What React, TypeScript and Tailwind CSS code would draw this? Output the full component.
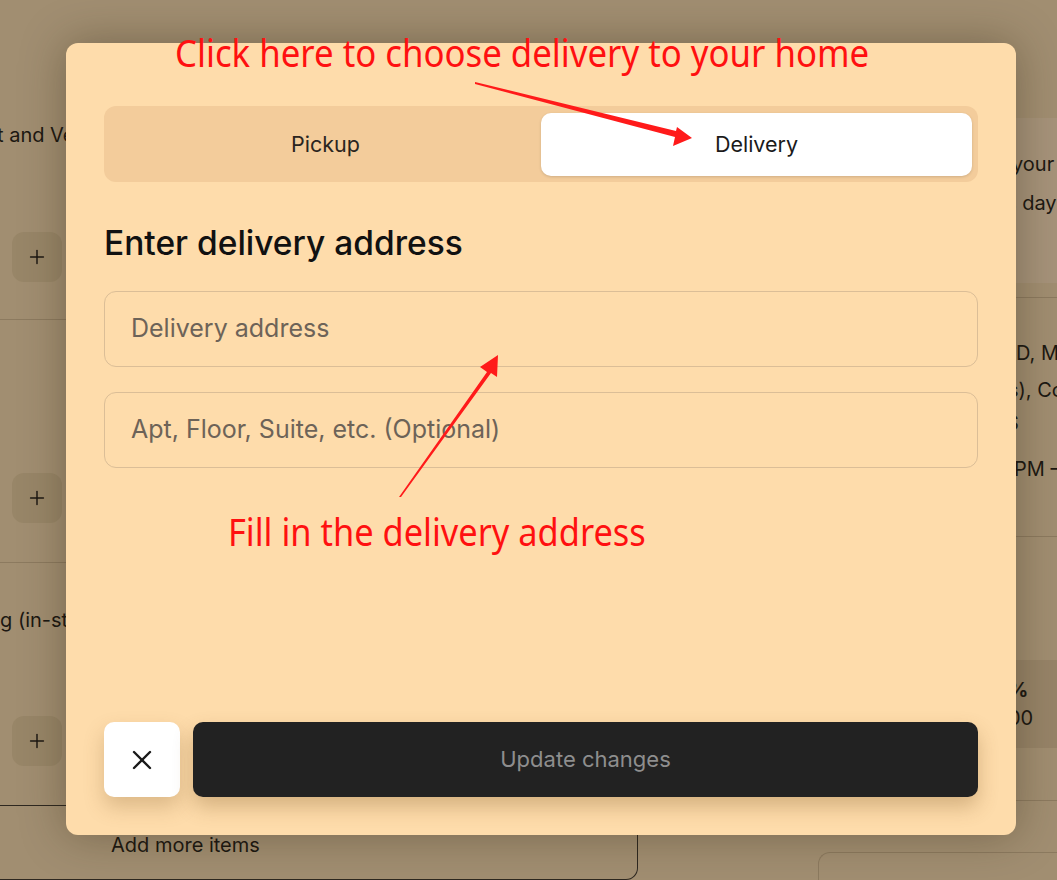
import { X, Plus } from "lucide-react";

function PlusButton() {
  return (
    <div className="flex h-[50px] w-[50px] items-center justify-center rounded-xl bg-[#988668]">
      <Plus className="h-[22px] w-[22px] text-[#1c1812]" strokeWidth={1.6} />
    </div>
  );
}

function Backdrop() {
  return (
    <div className="flex h-full w-full text-[20px] text-[#1c1812]">
      {/* cart items */}
      <div className="flex w-[638px] shrink-0 flex-col">
        <div className="flex h-[320px] shrink-0 flex-col border-b border-[#8c7a5f] pt-[120px]">
          <span className="-ml-[3px] whitespace-nowrap leading-[30px]">t and Vegetable box</span>
          <div className="ml-[12px] mt-[82px]">
            <PlusButton />
          </div>
        </div>
        <div className="flex h-[243px] shrink-0 flex-col justify-end border-b border-[#8c7a5f] pb-[39px]">
          <div className="ml-[12px]">
            <PlusButton />
          </div>
        </div>
        <div className="flex h-[242px] shrink-0 flex-col pt-[42px]">
          <span className="whitespace-nowrap leading-[30px]">g (in-store)</span>
          <div className="ml-[12px] mt-[81px]">
            <PlusButton />
          </div>
        </div>
        <div className="flex h-[75px] shrink-0 items-center rounded-br-xl border-r border-t border-b border-[#2e2820] pl-[111px] pt-[4px]">
          Add more items
        </div>
      </div>
      {/* order summary */}
      <div className="flex flex-1 flex-col pl-[22px]">
        <div className="mt-[118px] flex h-[165px] shrink-0 flex-col rounded-l-xl bg-[#a6937a] pl-[352px] pt-[28px]">
          <span className="whitespace-nowrap leading-[36px]">your</span>
          <span className="-ml-[6px] mt-[3px] whitespace-nowrap leading-[36px]">s day</span>
        </div>
        <div className="mt-[14px] flex h-[240px] shrink-0 flex-col border-t border-b border-[#8c7a5f] pl-[352px] pt-[37px]">
          <span className="ml-[4px] whitespace-nowrap leading-[36px]">D, M</span>
          <span className="-ml-[4px] mt-[1px] whitespace-nowrap leading-[36px]">s), Co</span>
          <span className="-ml-[6px] -mt-[3px] whitespace-nowrap leading-[36px]">S</span>
          <span className="ml-[2px] mt-[10px] whitespace-nowrap leading-[36px]">PM –</span>
        </div>
        <div className="mt-[123px] flex h-[88px] shrink-0 flex-col justify-center bg-[#978468] pl-[352px]">
          <span className="-ml-[4px] font-bold leading-[28px]">%</span>
          <span className="-ml-[4px] leading-[28px]">00</span>
        </div>
        <div className="mt-[52px] h-[1px] shrink-0 bg-[#8c7a5f]" />
        <div className="ml-[158px] mt-[51px] h-[60px] shrink-0 rounded-tl-xl border-l border-t border-[#8c7a5f]" />
      </div>
    </div>
  );
}

function DeliveryModal() {
  return (
    <div className="absolute left-[66px] top-[43px] flex h-[792px] w-[950px] flex-col rounded-xl bg-[#fedcab] px-[38px] pb-[38px] pt-[63px] shadow-[0_0_45px_rgba(40,28,10,0.35)]">
      <div className="grid h-[76px] grid-cols-2 rounded-xl bg-[#f3cc9b] p-[6px] pt-[7px] text-[21.5px]">
        <button className="flex items-center justify-center text-[#2a2520]">Pickup</button>
        <button className="flex items-center justify-center rounded-[10px] bg-white text-[#1a1a1a] shadow-[0_1px_3px_rgba(0,0,0,0.15)]">
          Delivery
        </button>
      </div>
      <h2 className="mt-[41px] text-[33.5px] font-medium leading-[40px] text-[#111]">Enter delivery address</h2>
      <div className="mt-[28px] flex h-[76px] items-center rounded-xl border border-[#dbbe97] px-[26px] text-[25px] text-[#6d6358]">
        Delivery address
      </div>
      <div className="mt-[25px] flex h-[76px] items-center rounded-xl border border-[#dbbe97] px-[26px] text-[25px] text-[#6d6358]">
        Apt, Floor, Suite, etc. (Optional)
      </div>
      <div className="mt-auto flex h-[75px] gap-[13px]">
        <button className="flex w-[76px] items-center justify-center rounded-[10px] bg-white shadow-[0_10px_20px_rgba(120,80,30,0.25)]">
          <X className="h-[32px] w-[32px] text-[#1a1a1a]" strokeWidth={1.8} />
        </button>
        <button className="flex flex-1 items-center justify-center rounded-[10px] bg-[#222222] text-[22px] text-[#8e8e8e] shadow-[0_10px_20px_rgba(120,80,30,0.3)]">
          Update changes
        </button>
      </div>
    </div>
  );
}

function Annotations() {
  return (
    <>
      <svg className="pointer-events-none absolute inset-0" width="1057" height="880" viewBox="0 0 1057 880">
        <polygon points="475,82 676,131 677,127 692,138 673,146 675,137 475,84" fill="#ff1a1a" />
        <polygon points="399,497 487,372 480,367 498,355 497,377 491,373 401,497" fill="#ff1a1a" />
      </svg>
      <div className="pointer-events-none absolute left-[175px] top-[28px] origin-left scale-x-[0.915] whitespace-nowrap font-['Noto_Sans',sans-serif] text-[38px] leading-[48px] text-[#ff1010]">
        Click here to choose delivery to your home
      </div>
      <div className="pointer-events-none absolute left-[228px] top-[507px] origin-left scale-x-[0.905] whitespace-nowrap font-['Noto_Sans',sans-serif] text-[38px] leading-[48px] text-[#ff1010]">
        Fill in the delivery address
      </div>
    </>
  );
}

export default function App() {
  return (
    <div className="relative h-[880px] w-[1057px] overflow-hidden bg-[#a18e71] font-['Inter',sans-serif]">
      <Backdrop />
      <DeliveryModal />
      <Annotations />
    </div>
  );
}
